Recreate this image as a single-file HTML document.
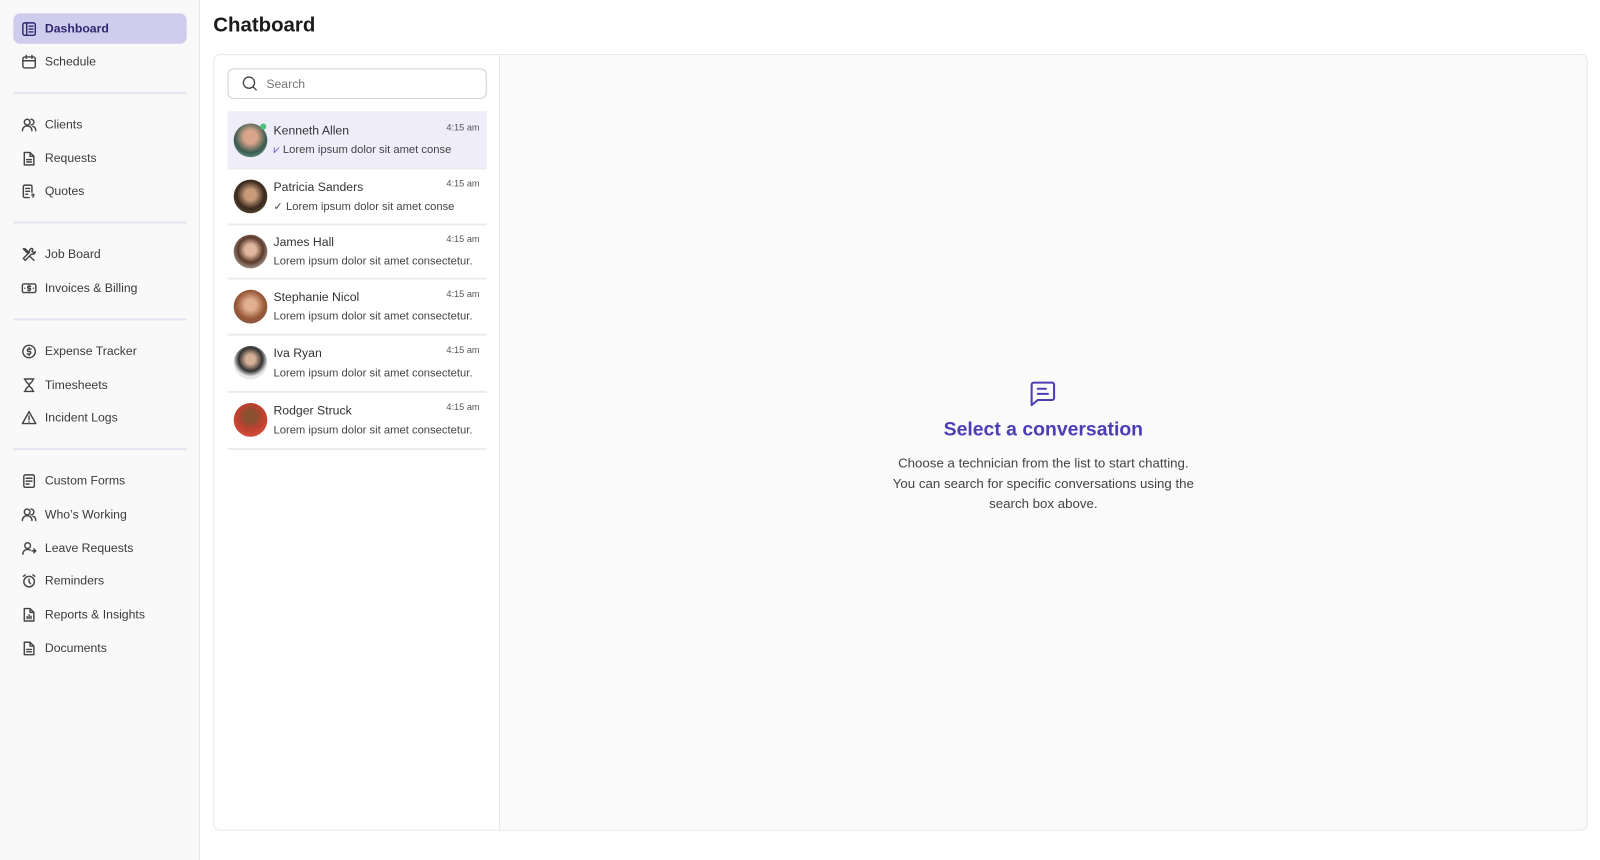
<!DOCTYPE html>
<html><head><meta charset="utf-8"><style>
*{box-sizing:border-box;margin:0;padding:0}
body{width:1600px;height:843px;font-family:"Liberation Sans",sans-serif;background:#fff;position:relative;overflow:hidden;color:#333}
#w{position:absolute;left:0;top:0;width:1568px;height:826px;transform:scale(1.0204);transform-origin:0 0}
.side{position:absolute;left:0;top:0;width:196px;height:843px;background:#f9f9f9;border-right:1px solid #e6e6ea}
.it{position:absolute;left:13px;width:170px;height:30px;display:flex;align-items:center;padding-left:8px;font-size:12px;color:#3a3a3a}
.it svg{width:15px;height:15px;margin-right:8px;fill:none;stroke:#444;stroke-width:1.5;stroke-linecap:round;stroke-linejoin:round}
.it.act{background:#d0ccee;border-radius:7px;color:#2e2770;font-weight:bold}
.it.act svg{stroke:#2e2770}
.div{position:absolute;left:13px;width:170px;height:2px;background:#e6e4f2}
h1{position:absolute;left:209px;top:14px;font-size:20px;font-weight:bold;color:#1a1a1a}
.panel{position:absolute;left:209px;top:53px;width:1347px;height:761px;border:1px solid #e8e8e8;border-radius:6px;overflow:hidden}
.list{position:absolute;left:0;top:0;width:280px;height:100%;border-right:1px solid #e8e8e8;background:#fff}
.right{position:absolute;left:280px;top:0;right:0;height:100%;background:#fafafa}
.search{position:absolute;left:13px;top:13px;width:254px;height:30px;border:1px solid #d0d0d0;border-radius:6px;display:flex;align-items:center;padding-left:13px;font-size:12px;color:#777}
.row{position:absolute;left:13px;width:254px;border-bottom:2px solid #ececec}
.row.a{background:#efedf9}
.av{position:absolute;left:6px;width:33px;height:33px;border-radius:50%}
.nm{position:absolute;left:45px;font-size:12px;color:#333}
.ms{position:absolute;left:45px;font-size:11px;color:#444}
.tm{position:absolute;right:7px;font-size:9px;color:#555}
</style></head><body><div id="w">
<div class="side">
<div class="it act" style="top:13px"><svg viewBox="0 0 16 16"><rect x="1.5" y="1.5" width="13" height="13" rx="2"/><path d="M5.5 1.5v13M8 5h4M8 8h4M8 11h4"/></svg>Dashboard</div>
<div class="it" style="top:45px"><svg viewBox="0 0 16 16"><rect x="1.5" y="3" width="13" height="11.5" rx="2"/><path d="M1.5 7h13M5 1.5v3M11 1.5v3"/></svg>Schedule</div>
<div class="div" style="top:90px"></div>
<div class="it" style="top:107px"><svg viewBox="0 0 16 16"><circle cx="6" cy="5" r="3"/><path d="M1 14c0-3 2-5 5-5s5 2 5 5M10 2a3 3 0 010 6M12 9.5c2 .5 3 2 3 4.5"/></svg>Clients</div>
<div class="it" style="top:140px"><svg viewBox="0 0 16 16"><path d="M3 1.5h6l4 4v9H3z M9 1.5v4h4M5.5 9h5M5.5 11.5h5"/></svg>Requests</div>
<div class="it" style="top:172px"><svg viewBox="0 0 16 16"><path d="M11 9V3a1.5 1.5 0 00-1.5-1.5h-6A1.5 1.5 0 002 3v10a1.5 1.5 0 001.5 1.5H8M4.5 5h4M4.5 8h4M4.5 11h2M11 12a1 1 0 112 0c0 1-1 1-1 2"/></svg>Quotes</div>
<div class="div" style="top:217px"></div>
<div class="it" style="top:234px"><svg viewBox="0 0 16 16"><path d="M2 2l5 5M2 2l2 0 4 4M11 1.5a3 3 0 00-2.5 4L2 12l2 2 6.5-6.5a3 3 0 004-2.5l-2 1-1.5-1.5 1-2zM9 10l4 4"/></svg>Job Board</div>
<div class="it" style="top:267px"><svg viewBox="0 0 16 16"><rect x="1" y="3.5" width="14" height="9" rx="1.5"/><path d="M9.5 6H7.5a1 1 0 000 2h1a1 1 0 010 2H6.5M8 5v1M8 10v1M3.5 8h0M12.5 8h0"/></svg>Invoices &amp; Billing</div>
<div class="div" style="top:312px"></div>
<div class="it" style="top:329px"><svg viewBox="0 0 16 16"><circle cx="8" cy="8" r="6.5"/><path d="M10 5.5H7.5a1.2 1.2 0 000 2.5h1a1.2 1.2 0 010 2.5H6M8 4v1.5M8 10.5V12"/></svg>Expense Tracker</div>
<div class="it" style="top:362px"><svg viewBox="0 0 16 16"><path d="M3 1.5h10M3 14.5h10M4 1.5c0 4 4 4.5 4 6.5s-4 2.5-4 6.5M12 1.5c0 4-4 4.5-4 6.5s4 2.5 4 6.5"/></svg>Timesheets</div>
<div class="it" style="top:394px"><svg viewBox="0 0 16 16"><path d="M8 1.5L1 14h14zM8 6v4M8 12v.2"/></svg>Incident Logs</div>
<div class="div" style="top:439px"></div>
<div class="it" style="top:456px"><svg viewBox="0 0 16 16"><rect x="2.5" y="1.5" width="11" height="13" rx="1.5"/><path d="M5 5h6M5 8h6M5 11h3"/></svg>Custom Forms</div>
<div class="it" style="top:489px"><svg viewBox="0 0 16 16"><circle cx="6" cy="5" r="3"/><path d="M1 14c0-3 2-5 5-5s5 2 5 5M10 2a3 3 0 010 6M12 9.5c2 .5 3 2 3 4.5"/></svg>Who’s Working</div>
<div class="it" style="top:522px"><svg viewBox="0 0 16 16"><circle cx="6.5" cy="5" r="3"/><path d="M1.5 14c0-3 2-5 5-5 1 0 2 .3 2.7.8M11 10.5h4M13 8.5l2 2-2 2"/></svg>Leave Requests</div>
<div class="it" style="top:554px"><svg viewBox="0 0 16 16"><circle cx="8" cy="8.5" r="5.5"/><path d="M8 6v3l1.5 1.5M2 3l2-1.5M14 3l-2-1.5"/></svg>Reminders</div>
<div class="it" style="top:587px"><svg viewBox="0 0 16 16"><path d="M3 1.5h6l4 4v9H3z M9 1.5v4h4M6 12V10M8 12V8M10 12V9.5"/></svg>Reports &amp; Insights</div>
<div class="it" style="top:620px"><svg viewBox="0 0 16 16"><path d="M3 1.5h6l4 4v9H3z M9 1.5v4h4M5.5 9h5M5.5 11.5h5"/></svg>Documents</div>
</div>
<h1>Chatboard</h1>
<div class="panel">
<div class="list">
<div class="search"><svg width="16" height="16" viewBox="0 0 16 16" fill="none" stroke="#444" stroke-width="1.3" style="margin-right:8px"><circle cx="7" cy="7" r="5.5"/><path d="M11 11l3.5 3.5"/></svg>Search</div>
<div class="row a" style="top:55px;height:57px"><div class="av" style="top:12px;background:radial-gradient(circle at 50% 40%,#d9a58a 25%,#3a5a50 60%,#8cc0b0)"></div><div style="position:absolute;left:32px;top:12px;width:6px;height:6px;border-radius:50%;background:#4ec27a"></div><div class="nm" style="top:12px">Kenneth Allen</div><div class="tm" style="top:11px">4:15 am</div><div class="ms" style="top:32px"><span style="color:#5b4fc0">⩗</span> Lorem ipsum dolor sit amet conse</div></div>
<div class="row" style="top:112px;height:55px"><div class="av" style="top:10px;background:radial-gradient(circle at 50% 45%,#c99a7a 22%,#3a2a1e 55%,#6a5a40)"></div><div class="nm" style="top:10px">Patricia Sanders</div><div class="tm" style="top:9px">4:15 am</div><div class="ms" style="top:30px">✓ Lorem ipsum dolor sit amet conse</div></div>
<div class="row" style="top:167px;height:53px"><div class="av" style="top:9px;background:radial-gradient(circle at 50% 45%,#e0b8a0 22%,#5a3a2a 50%,#e8e8e8)"></div><div class="nm" style="top:9px">James Hall</div><div class="tm" style="top:8px">4:15 am</div><div class="ms" style="top:29px">Lorem ipsum dolor sit amet consectetur.</div></div>
<div class="row" style="top:220px;height:55px"><div class="av" style="top:10px;background:radial-gradient(circle at 50% 45%,#e0b090 22%,#9a5a3a 55%,#705040)"></div><div class="nm" style="top:10px">Stephanie Nicol</div><div class="tm" style="top:9px">4:15 am</div><div class="ms" style="top:30px">Lorem ipsum dolor sit amet consectetur.</div></div>
<div class="row" style="top:275px;height:56px"><div class="av" style="top:10px;background:radial-gradient(circle at 50% 40%,#d8b098 18%,#303030 45%,#e8e8e8 65%)"></div><div class="nm" style="top:10px">Iva Ryan</div><div class="tm" style="top:9px">4:15 am</div><div class="ms" style="top:31px">Lorem ipsum dolor sit amet consectetur.</div></div>
<div class="row" style="top:331px;height:56px"><div class="av" style="top:10px;background:radial-gradient(circle at 50% 40%,#8a5030 22%,#c04030 50%,#e05a40)"></div><div class="nm" style="top:10px">Rodger Struck</div><div class="tm" style="top:9px">4:15 am</div><div class="ms" style="top:31px">Lorem ipsum dolor sit amet consectetur.</div></div>
</div>
<div class="right">
<svg style="position:absolute;left:517px;top:318px" width="30" height="30" viewBox="0 0 30 30" fill="none" stroke="#4a3db5" stroke-width="2" stroke-linecap="round" stroke-linejoin="round"><path d="M4 5a2 2 0 012-2h18a2 2 0 012 2v13a2 2 0 01-2 2H10l-6 5z M10 9h8M10 14h10"/></svg>
<div style="position:absolute;left:0;right:0;top:357px;text-align:center;font-size:19px;font-weight:bold;color:#4a3db5">Select a conversation</div>
<div style="position:absolute;left:0;right:0;top:390px;text-align:center;font-size:13px;line-height:20px;color:#444">Choose a technician from the list to start chatting.<br>You can search for specific conversations using the<br>search box above.</div>
</div>
</div>
</div></body></html>
